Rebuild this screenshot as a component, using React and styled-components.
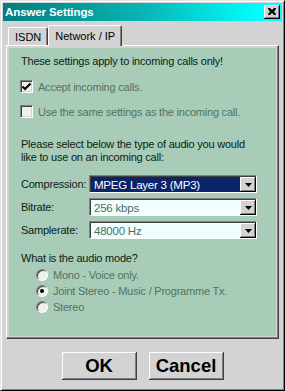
import React from 'react';
import styled, { createGlobalStyle } from 'styled-components';

const GlobalStyle = createGlobalStyle`
  html, body {
    margin: 0;
    padding: 0;
    background: #d3d3d3;
  }
  body {
    font-family: "Liberation Sans", Arial, sans-serif;
  }
`;

const Window = styled.div`
  width: 285px;
  height: 391px;
  box-sizing: border-box;
  background: #d3d3d3;
  border: 1px solid;
  border-color: #e4e4e4 #000 #000 #e4e4e4;
  box-shadow: inset 1px 1px #fff, inset -1px -1px #808080;
  padding: 2px;
  display: flex;
  flex-direction: column;
`;

const TitleBar = styled.div`
  height: 18px;
  display: flex;
  align-items: center;
  justify-content: space-between;
  padding: 0 2px 0 2px;
  background: linear-gradient(90deg, #017f7f 0%, #08b4b4 50%, #00ffff 92%);
`;

const Title = styled.span`
  color: #fff;
  font-weight: bold;
  font-size: 11.5px;
  letter-spacing: -0.1px;
`;

const CloseButton = styled.div`
  width: 16px;
  height: 14px;
  box-sizing: border-box;
  background: #d3d3d3;
  box-shadow: inset -1px -1px #000, inset 1px 1px #fff, inset -2px -2px #808080;
  display: flex;
  align-items: center;
  justify-content: center;
  padding-bottom: 1px;
`;

const TabStrip = styled.div`
  height: 24px;
  display: flex;
  align-items: flex-end;
  padding-left: 5px;
  position: relative;
  z-index: 1;
`;

const Tab = styled.div`
  box-sizing: border-box;
  height: ${p => (p.$active ? 21 : 18)}px;
  margin-bottom: ${p => (p.$active ? -1 : 0)}px;
  padding: ${p => (p.$active ? '4px 6px 0' : '3px 6px 0')};
  font-size: 11px;
  color: #000;
  background: #d3d3d3;
  border-top: 1px solid #fff;
  border-left: 1px solid #fff;
  border-right: 1px solid #404040;
  box-shadow: inset -1px 0 #808080;
  border-radius: 2px 2px 0 0;
`;

const Panel = styled.div`
  margin-left: 3px;
  width: 273px;
  height: 294px;
  box-sizing: border-box;
  border: 1px solid;
  border-color: #fff #404040 #404040 #fff;
  box-shadow: inset -1px -1px #808080;
  padding: 2px;
`;

const Pane = styled.div`
  height: 100%;
  box-sizing: border-box;
  background: #a8ccb8;
  padding: 7px 12px 0 12px;
  font-size: 11px;
  letter-spacing: -0.22px;
  color: #0c2216;
  display: flex;
  flex-direction: column;
`;

const Line = styled.div`
  line-height: 13px;
  margin-top: ${p => p.$top || 0}px;
`;

const CheckRow = styled.div`
  display: flex;
  align-items: center;
  gap: 5px;
  height: 13px;
  margin-top: 12px;
  margin-left: -1px;
  color: #52735f;
`;

const CheckBox = styled.div`
  width: 13px;
  height: 13px;
  box-sizing: border-box;
  background: #eef2ee;
  border: 1px solid;
  border-color: #808080 #fff #fff #808080;
  box-shadow: inset 1px 1px #404040, inset -1px -1px #d3d3d3;
  display: flex;
  align-items: center;
  justify-content: center;
`;

const FieldRow = styled.div`
  display: flex;
  align-items: center;
  height: 18px;
  margin-top: ${p => p.$top}px;
`;

const FieldLabel = styled.div`
  width: 68px;
`;

const Combo = styled.div`
  width: 168px;
  height: 18px;
  box-sizing: border-box;
  border: 1px solid;
  border-color: #808080 #fff #fff #808080;
  box-shadow: inset 1px 1px #404040;
  padding: 1px 0 0 1px;
  background: #f0fffe;
  display: flex;
`;

const ComboValue = styled.div`
  flex: 1;
  display: flex;
  align-items: center;
  padding-left: 3px;
  background: ${p => (p.$focus ? '#0a246a' : 'transparent')};
  color: ${p => (p.$focus ? '#fff' : '#4e6e5c')};
  font-size: 11.5px;
`;

const ComboButton = styled.div`
  width: 16px;
  box-sizing: border-box;
  background: #d3d3d3;
  box-shadow: inset -1px -1px #000, inset 1px 1px #fff, inset -2px -2px #808080;
  display: flex;
  align-items: center;
  justify-content: center;
`;

const RadioGroup = styled.div`
  margin-top: 2px;
  display: flex;
  flex-direction: column;
`;

const RadioRow = styled.div`
  display: flex;
  align-items: center;
  gap: 5px;
  height: 16px;
  padding-left: 15px;
  color: #52735f;
`;

const Radio = styled.div`
  width: 12px;
  height: 12px;
  box-sizing: border-box;
  border-radius: 50%;
  border: 1px solid;
  border-color: #808080 #fff #fff #808080;
  background: #eef2ee;
  box-shadow: inset 1px 1px #404040;
  display: flex;
  align-items: center;
  justify-content: center;
  &::after {
    content: '';
    display: ${p => (p.$checked ? 'block' : 'none')};
    width: 4px;
    height: 4px;
    border-radius: 50%;
    background: #000;
  }
`;

const ButtonRow = styled.div`
  display: flex;
  justify-content: center;
  gap: 12px;
  margin-top: 13px;
`;

const DialogButton = styled.button`
  width: 75px;
  height: 28px;
  padding: 0;
  border: none;
  background: #d3d3d3;
  box-shadow: inset -1px -1px #404040, inset 1px 1px #fff, inset -2px -2px #808080;
  font-family: "Liberation Sans", Arial, sans-serif;
  font-weight: bold;
  font-size: 18.5px;
  color: #000;
`;

const CloseGlyph = () => (
  <svg width="8" height="7" viewBox="0 0 8 7">
    <path d="M0 0h2l2 2 2-2h2v1L6 3.5 8 6v1H6L4 5 2 7H0V6l2-2.5L0 1z" fill="#000" />
  </svg>
);

const Arrow = () => (
  <svg width="7" height="4" viewBox="0 0 7 4">
    <path d="M0 0h7L3.5 4z" fill="#000" />
  </svg>
);

const Check = () => (
  <svg width="9" height="9" viewBox="0 0 9 9">
    <path d="M0.5 4.5l2.5 2.5 5.5-5.5" stroke="#000" strokeWidth="2" fill="none" />
  </svg>
);

const fields = [
  { label: 'Compression:', value: 'MPEG Layer 3 (MP3)', focus: true, top: 11 },
  { label: 'Bitrate:', value: '256 kbps', top: 5 },
  { label: 'Samplerate:', value: '48000 Hz', top: 5 },
];

const modes = [
  { label: 'Mono - Voice only.' },
  { label: 'Joint Stereo - Music / Programme Tx.', checked: true },
  { label: 'Stereo' },
];

const App = () => (
  <>
    <GlobalStyle />
    <Window>
      <TitleBar>
        <Title>Answer Settings</Title>
        <CloseButton><CloseGlyph /></CloseButton>
      </TitleBar>

      <TabStrip>
        <Tab>ISDN</Tab>
        <Tab $active>Network / IP</Tab>
      </TabStrip>

      <Panel>
        <Pane>
          <Line>These settings apply to incoming calls only!</Line>
          <CheckRow>
            <CheckBox><Check /></CheckBox>
            Accept incoming calls.
          </CheckRow>
          <CheckRow>
            <CheckBox />
            Use the same settings as the incoming call.
          </CheckRow>

          <Line $top={20}>Please select below the type of audio you would</Line>
          <Line>like to use on an incoming call:</Line>

          {fields.map(f => (
            <FieldRow key={f.label} $top={f.top}>
              <FieldLabel>{f.label}</FieldLabel>
              <Combo>
                <ComboValue $focus={f.focus}>{f.value}</ComboValue>
                <ComboButton><Arrow /></ComboButton>
              </Combo>
            </FieldRow>
          ))}

          <Line $top={13}>What is the audio mode?</Line>
          <RadioGroup>
            {modes.map(m => (
              <RadioRow key={m.label}>
                <Radio $checked={m.checked} />
                {m.label}
              </RadioRow>
            ))}
          </RadioGroup>
        </Pane>
      </Panel>

      <ButtonRow>
        <DialogButton>OK</DialogButton>
        <DialogButton>Cancel</DialogButton>
      </ButtonRow>
    </Window>
  </>
);

export default App;
